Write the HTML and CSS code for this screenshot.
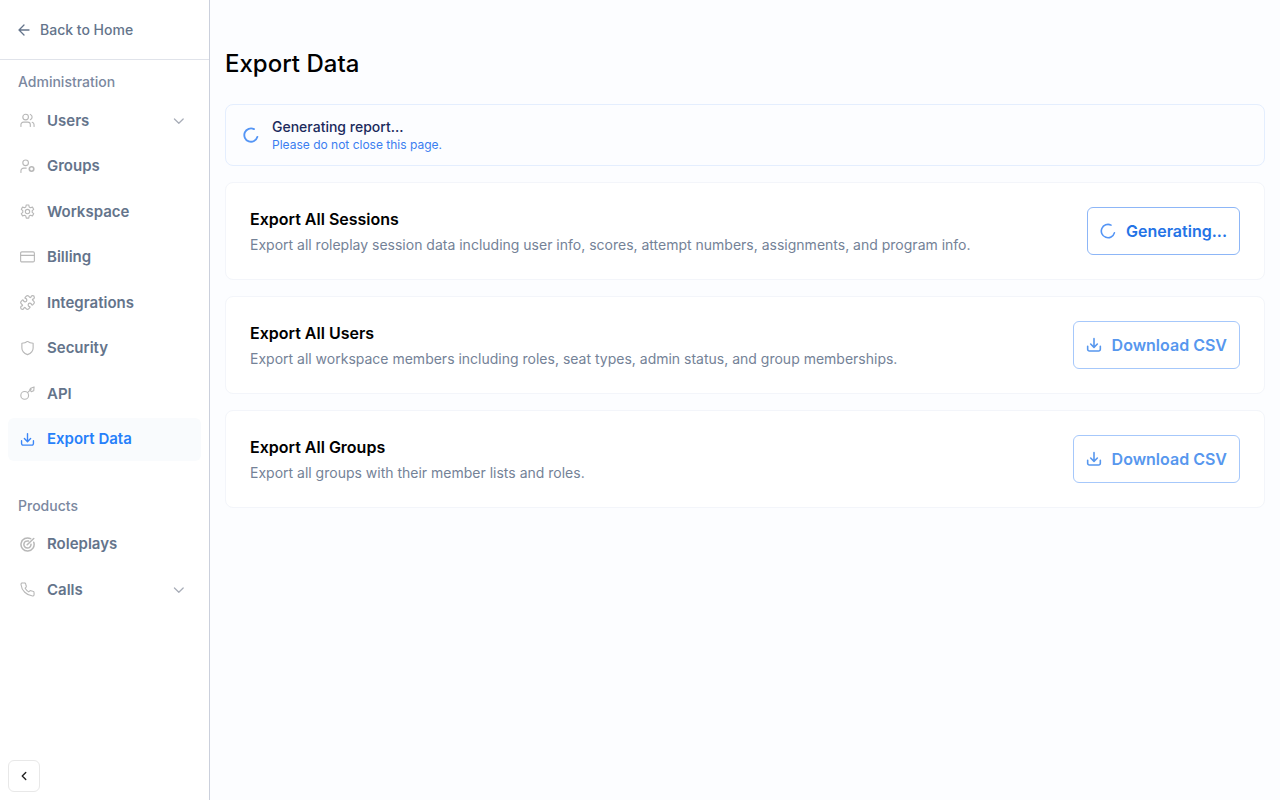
FILE: index.html
```html
<!DOCTYPE html>
<html lang="en">
<head>
<meta charset="utf-8">
<meta name="viewport" content="width=device-width, initial-scale=1">
<title>Export Data</title>
<link rel="stylesheet" href="styles.css">
</head>
<body>
<svg class="sprite" aria-hidden="true">
  <symbol id="chevron" viewBox="0 0 24 24"><path d="m5.500 9.500 7 7 7-7"/></symbol>
  <symbol id="download" viewBox="0 0 24 24"><path d="M2.500 14v4.500a2.500 2.500 0 0 0 2.500 2.500h14a2.500 2.500 0 0 0 2.500-2.500V14M12 2.500V15M7 10.500l5 5 5-5"/></symbol>
  <symbol id="spinner" viewBox="0 0 24 24"><path d="M16.500 3.200A10 10 0 1 0 21.600 14.800"/></symbol>
</svg>
<div class="app">
  <aside class="sidebar">
    <a class="back" href="#"><svg class="icon" viewBox="0 0 24 24"><path d="M22 12H3M12 2 2 12l10 10"/></svg>Back to Home</a>
    <nav class="nav">
      <h2 class="nav-title">Administration</h2>
      <ul class="nav-list">
        <li><a class="nav-item" href="#"><svg class="icon" viewBox="0 0 24 24"><circle cx="9" cy="6.500" r="4.500"/><path d="M1.500 21.500v-3a4 4 0 0 1 4-4h7a4 4 0 0 1 4 4v3M16.500 2.300a4.500 4.500 0 0 1 0 8.400M19.500 14.800a4 4 0 0 1 3 3.900v2.800"/></svg>Users<svg class="icon chevron"><use href="#chevron"/></svg></a></li>
        <li><a class="nav-item" href="#"><svg class="icon" viewBox="0 0 24 24"><circle cx="9" cy="6" r="4.500"/><path d="M1.500 21.500v-2.500a4.500 4.500 0 0 1 4.500-4.500h4"/><circle cx="18.500" cy="16" r="3.600" stroke-width="2.600"/></svg>Groups</a></li>
        <li><a class="nav-item" href="#"><svg class="icon" viewBox="0 0 24 24"><circle cx="12" cy="12" r="3.500"/><path d="M10 1.500h4l.7 3.300 2 1.200 3.200-1 2 3.500-2.400 2.200v2.600l2.400 2.200-2 3.500-3.200-1-2 1.200-.7 3.300h-4l-.7-3.300-2-1.200-3.200 1-2-3.500 2.400-2.200v-2.600L2.100 8.500l2-3.500 3.200 1 2-1.200z"/></svg>Workspace</a></li>
        <li><a class="nav-item" href="#"><svg class="icon" viewBox="0 0 24 24"><rect x="1" y="3" width="22" height="16" rx="2"/><path d="M1 8.500h22"/></svg>Billing</a></li>
        <li><a class="nav-item" href="#"><svg class="icon" viewBox="1 1 22 22"><path d="M15.390 4.390a1 1 0 0 0 1.680-.474 2.500 2.500 0 1 1 3.014 3.015 1 1 0 0 0-.474 1.680l1.683 1.682a2.414 2.414 0 0 1 0 3.414L19.610 15.390a1 1 0 0 1-1.680-.474 2.500 2.500 0 1 0-3.014 3.015 1 1 0 0 1 .474 1.680l-1.683 1.682a2.414 2.414 0 0 1-3.414 0L8.610 19.610a1 1 0 0 0-1.680.474 2.500 2.500 0 1 1-3.014-3.015 1 1 0 0 0 .474-1.680l-1.683-1.682a2.414 2.414 0 0 1 0-3.414L4.390 8.610a1 1 0 0 1 1.680.474 2.500 2.500 0 1 0 3.014-3.015 1 1 0 0 1-.474-1.680l1.683-1.682a2.414 2.414 0 0 1 3.414 0z"/></svg>Integrations</a></li>
        <li><a class="nav-item" href="#"><svg class="icon" viewBox="0 1 24 24"><path d="M12 1.500c2.500 2 5.500 3 9 3.200V12c0 5-3.500 8.500-9 10.800C6.500 20.500 3 17 3 12V4.700c3.500-.2 6.500-1.200 9-3.200z"/></svg>Security</a></li>
        <li><a class="nav-item" href="#"><svg class="icon" viewBox="0 0 24 24"><circle cx="7.500" cy="15" r="6.200"/><path d="M12 10.500 18 5M17 3.500l5.500-2-.5 6-4 1.500-2.500-3z"/></svg>API</a></li>
        <li><a class="nav-item active" href="#" aria-current="page"><svg class="icon"><use href="#download"/></svg>Export Data</a></li>
      </ul>
      <h2 class="nav-title">Products</h2>
      <ul class="nav-list">
        <li><a class="nav-item" href="#"><svg class="icon heavy" viewBox="0 0 24 24"><path d="M17 2.700A10.500 10.500 0 1 0 22 8.500M13.500 6.500A5.700 5.700 0 1 0 17.600 11.500M11.500 12.500 22 2.500"/></svg>Roleplays</a></li>
        <li><a class="nav-item" href="#"><svg class="icon" viewBox="0 0 24 24"><path d="M22.500 17v3.200a2.200 2.200 0 0 1-2.400 2.200C10.500 21.500 2.500 13.500 1.600 3.900A2.200 2.200 0 0 1 3.800 1.500H7a2.200 2.200 0 0 1 2.200 1.900c.2 1 .4 2 .8 3a2.200 2.200 0 0 1-.5 2.300L8.200 10a17 17 0 0 0 5.800 5.800l1.300-1.300a2.200 2.200 0 0 1 2.300-.5c1 .4 2 .6 3 .8a2.200 2.200 0 0 1 1.900 2.200z"/></svg>Calls<svg class="icon chevron"><use href="#chevron"/></svg></a></li>
      </ul>
    </nav>
    <button class="collapse" type="button" aria-label="Collapse sidebar"><svg class="icon" viewBox="0 0 24 24"><path d="m15 6-6 6 6 6"/></svg></button>
  </aside>
  <main class="main">
    <h1 class="title">Export Data</h1>
    <div class="notice" role="status">
      <svg class="icon spinner"><use href="#spinner"/></svg>
      <div>
        <p class="notice-title">Generating report...</p>
        <p class="notice-text">Please do not close this page.</p>
      </div>
    </div>
    <section class="card">
      <div>
        <h2 class="card-title">Export All Sessions</h2>
        <p class="card-text">Export all roleplay session data including user info, scores, attempt numbers, assignments, and program info.</p>
      </div>
      <button class="button busy" type="button"><svg class="icon spinner"><use href="#spinner"/></svg>Generating...</button>
    </section>
    <section class="card">
      <div>
        <h2 class="card-title">Export All Users</h2>
        <p class="card-text">Export all workspace members including roles, seat types, admin status, and group memberships.</p>
      </div>
      <button class="button" type="button" disabled><svg class="icon"><use href="#download"/></svg>Download CSV</button>
    </section>
    <section class="card">
      <div>
        <h2 class="card-title">Export All Groups</h2>
        <p class="card-text">Export all groups with their member lists and roles.</p>
      </div>
      <button class="button" type="button" disabled><svg class="icon"><use href="#download"/></svg>Download CSV</button>
    </section>
  </main>
</div>
</body>
</html>
```
FILE: styles.css
```css
* { box-sizing: border-box; }
body, h1, h2, p, ul { margin: 0; padding: 0; }
body { font-family: Inter, "Liberation Sans", sans-serif; color: #000; }
ul { list-style: none; }
a { color: inherit; text-decoration: none; }
button { font-family: inherit; }
.sprite { display: none; }
.icon {
  flex: none;
  width: 16px;
  height: 16px;
  fill: none;
  stroke: currentColor;
  stroke-width: 2.4;
  stroke-linecap: round;
  stroke-linejoin: round;
}
.spinner { stroke-width: 2.8; }
.app { display: flex; min-height: 100vh; }

.sidebar {
  display: flex;
  flex-direction: column;
  flex: none;
  width: 210px;
  border-right: 1px solid #cbd0dc;
  background: #fff;
}
.back {
  display: flex;
  align-items: center;
  gap: 10px;
  padding: 20px 18px 19px;
  border-bottom: 1px solid #e0e3ea;
  color: #64748b;
  font-size: 14px;
  font-weight: 500;
  line-height: 20px;
}
.back .icon { width: 12px; height: 12px; stroke-width: 2.6; }
.nav { flex: 1; padding: 12px 8px; }
.nav-title {
  padding: 0 10px;
  margin-bottom: 8px;
  color: #7b88a0;
  font-size: 14px;
  font-weight: 500;
  line-height: 1.4;
}
.nav-list { display: flex; flex-direction: column; gap: 3px; }
.nav-list + .nav-title { margin-top: 35px; }
.nav-item {
  display: flex;
  align-items: center;
  gap: 12px;
  padding: 10px 15px 10px 12px;
  border-radius: 6px;
  color: #64748b;
  font-size: 15px;
  font-weight: 600;
  line-height: 1.5;
}
.nav-item .icon { width: 15px; height: 15px; color: #b8b8b8; stroke-width: 1.8; }
.nav-item .heavy { stroke-width: 2.4; }
.nav-item .chevron { margin-left: auto; color: #a8adb8; stroke-width: 2; }
.nav-item.active { background: #f9fbfd; color: #2680fa; }
.nav-item.active .icon { color: #3b86f7; stroke-width: 2.2; }
.collapse {
  display: grid;
  place-items: center;
  width: 32px;
  height: 32px;
  margin: 8px;
  padding: 0;
  border: 1px solid #e8e8e8;
  border-radius: 6px;
  background: #fff;
  color: #222;
}
.collapse .icon { width: 14px; height: 14px; }

.main {
  display: flex;
  flex: 1;
  flex-direction: column;
  gap: 16px;
  min-width: 0;
  padding: 48px 15px 16px;
  background: #fcfdff;
}
.title { margin-bottom: 8px; font-size: 24px; font-weight: 500; line-height: 32px; }
.notice {
  display: flex;
  align-items: center;
  gap: 13px;
  padding: 12px 17px;
  border: 1px solid #e4eefe;
  border-radius: 8px;
  color: #5495f5;
}
.notice-title { color: #1b2a5c; font-size: 14px; font-weight: 500; line-height: 20px; }
.notice-text { color: #3b7ef0; font-size: 12px; line-height: 16px; }
.card {
  display: flex;
  align-items: center;
  justify-content: space-between;
  gap: 24px;
  padding: 24px;
  border: 1px solid #f3f5fa;
  border-radius: 8px;
  background: #fff;
}
.card-title { margin-bottom: 4px; font-size: 16px; font-weight: 600; line-height: 24px; }
.card-text { color: #748297; font-size: 14px; line-height: 20px; }
.button {
  display: flex;
  align-items: center;
  flex: none;
  gap: 10px;
  height: 48px;
  padding: 0 12px;
  border: 1px solid #a6c8fb;
  border-radius: 6px;
  background: #fff;
  color: #5797ee;
  font-size: 16px;
  font-weight: 600;
  line-height: 24px;
}
.button .spinner { stroke-width: 2.4; }
.busy { border-color: #8db6f7; color: #2473e6; }
.busy .icon { color: #5495f5; }
```
